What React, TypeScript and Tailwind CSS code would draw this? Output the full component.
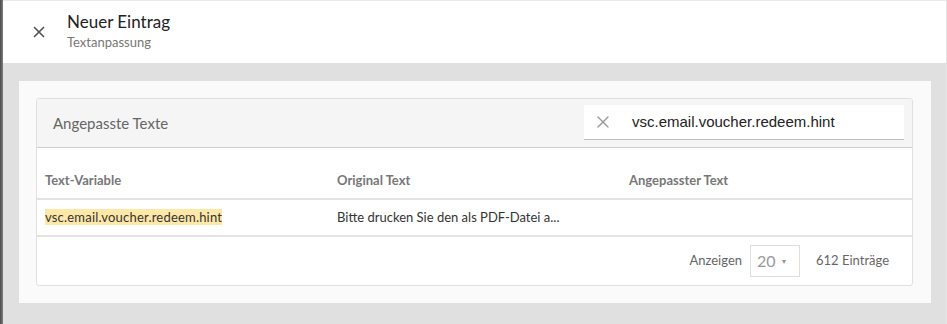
import { X } from "lucide-react";

const COLS = "grid grid-cols-[292px_292px_1fr] pl-2";

export default function App() {
  return (
    <div className="flex w-[947px] h-[324px] overflow-hidden font-['Lato',sans-serif] bg-white">
      {/* linker Rand */}
      <div className="w-[3px] h-full bg-gradient-to-r from-[#4a4a4a] to-[#808080]" />

      <div className="flex-1 flex flex-col border-r border-[#e6e6e6]">
        {/* Kopfzeile */}
        <div className="h-[63px] flex items-center border-t border-[#e8e8e8] bg-white">
          <div className="w-[64px] pl-[8px] flex justify-center">
            <X size={18} strokeWidth={2.2} className="text-[#555]" />
          </div>
          <div className="flex flex-col -mt-[2px]">
            <span className="text-[17px] leading-[22px] text-[#222]">Neuer Eintrag</span>
            <span className="text-[13px] leading-[19px] text-[#777]">Textanpassung</span>
          </div>
        </div>

        {/* Inhalt */}
        <div className="flex-1 bg-[#e0e0e0] pl-4 pr-[15px] pt-[18px] pb-[21px]">
          <div className="h-full bg-[#fafafa] pl-[17px] pr-[18px] pt-[17px]">
            <div className="bg-white border border-[#e0e0e0] rounded-[3px] overflow-hidden">
              {/* Kartenkopf */}
              <div className="h-[49px] bg-[#f5f5f5] border-b border-[#cfcfcf] flex items-center justify-between pl-4 pr-2">
                <span className="text-[15px] text-[#666]">Angepasste Texte</span>
                <div className="w-[320px] h-[35px] bg-white border-b border-[#bdbdbd] flex items-center mt-[-1px]">
                  <div className="w-[38px] flex justify-center">
                    <X size={20} strokeWidth={1.6} className="text-[#999]" />
                  </div>
                  <span className="ml-[10px] font-['Liberation_Sans',sans-serif] text-[15px] text-[#222]">
                    vsc.email.voucher.redeem.hint
                  </span>
                </div>
              </div>

              {/* Tabellenkopf */}
              <div className={`${COLS} h-[52px] items-end pb-[8px] border-b-2 border-[#e3e3e3] text-[13px] font-bold text-[#777]`}>
                <span>Text-Variable</span>
                <span>Original Text</span>
                <span>Angepasster Text</span>
              </div>

              {/* Zeile */}
              <div className={`${COLS} h-[37px] items-center border-b-2 border-[#e3e3e3] text-[13px] text-[#333]`}>
                <span>
                  <span className="bg-[#fde8a8] tracking-[0.2px]">vsc.email.voucher.redeem.hint</span>
                </span>
                <span>Bitte drucken Sie den als PDF-Datei a...</span>
                <span />
              </div>

              {/* Fußzeile */}
              <div className="h-[48px] flex items-center justify-end pr-[23px] text-[13px] text-[#666]">
                <span>Anzeigen</span>
                <div className="ml-[8px] w-[50px] h-[32px] border border-[#dedede] flex items-center pl-[6px] text-[#999] text-[16px]">
                  20
                  <span className="ml-[5px] text-[7px] text-[#999]">▼</span>
                </div>
                <span className="ml-[16px]">612 Einträge</span>
              </div>
            </div>
          </div>
        </div>
      </div>
    </div>
  );
}
